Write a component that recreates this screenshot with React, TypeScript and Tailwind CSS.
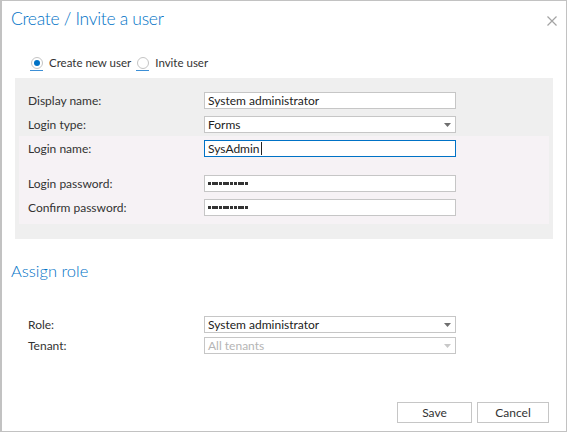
import React from 'react'

const font = "font-['Segoe_UI','Lato',sans-serif]"

function Arrow({ disabled = false }: { disabled?: boolean }) {
  return (
    <svg width="7" height="4" viewBox="0 0 7 4" className="shrink-0">
      <path d="M0 0H7L3.5 4Z" fill={disabled ? '#c8c8c8' : '#6f6f6f'} />
    </svg>
  )
}

function Field({ children, focused = false, select = false, disabled = false }: {
  children?: React.ReactNode
  focused?: boolean
  select?: boolean
  disabled?: boolean
}) {
  return (
    <div
      className={`w-[252px] h-[17px] bg-white border flex items-center justify-between pl-[3px] pr-[4px] ${
        focused ? 'border-[#0072c6]' : 'border-[#c6c6c6]'
      } ${disabled ? 'text-[#b5b5b5]' : 'text-[#222]'}`}
    >
      <span className="leading-[15px] whitespace-nowrap flex items-center">{children}</span>
      {select && <Arrow disabled={disabled} />}
    </div>
  )
}

// password mask
function Dots() {
  return (
    <span className="flex gap-[0.7px]">
      {Array.from({ length: 11 }).map((_, i) => (
        <span key={i} className="w-[3px] h-[3px] bg-[#333]" />
      ))}
    </span>
  )
}

function Row({ label, children, className = '' }: { label: string; children: React.ReactNode; className?: string }) {
  return (
    <div className={`flex items-center ${className}`}>
      <div className="w-[176px] shrink-0 leading-[17px]">{label}</div>
      {children}
    </div>
  )
}

function Radio({ checked, label }: { checked: boolean; label: string }) {
  return (
    <label className="flex items-center gap-[6px]">
      <span className="flex flex-col items-center">
        <span className="w-[12px] h-[12px] rounded-full border border-[#c4c4c4] bg-white flex items-center justify-center">
          {checked && <span className="w-[6px] h-[6px] rounded-full bg-[#0072c6]" />}
        </span>
        <span className="w-[13px] h-px bg-[#3c8fd6] mt-px" />
      </span>
      <span className="leading-[16px] -mt-[2px] text-[11.5px]">{label}</span>
    </label>
  )
}

export default function App() {
  return (
    <div className={`w-[567px] h-[432px] bg-white border border-[#c2c2c2] border-l-2 flex flex-col text-[12px] text-[#333] ${font}`}>
      {/* Header */}
      <div className="flex items-start justify-between pl-[9px] pr-[9px] pt-[5px]">
        <h1 className="text-[17.5px] tracking-[-0.3px] leading-[26px] text-[#0072c6] font-light">Create / Invite a user</h1>
        <svg width="10" height="10" viewBox="0 0 10 10" className="mt-[10px]">
          <path d="M0.5 0.5L9.5 9.5M9.5 0.5L0.5 9.5" stroke="#a3a3a3" strokeWidth="1.2" />
        </svg>
      </div>

      {/* Radios */}
      <div className="flex items-center gap-[5px] pl-[28px] mt-[25px]">
        <Radio checked label="Create new user" />
        <Radio checked={false} label="Invite user" />
      </div>

      {/* User panel */}
      <div className="mx-[13px] mt-[7px] bg-[#efefef] pt-[14px] pb-[15px]">
        <div className="px-[13px]">
          <Row label="Display name:">
            <Field>System administrator</Field>
          </Row>
          <Row label="Login type:" className="mt-[7px]">
            <Field select>Forms</Field>
          </Row>
        </div>
        <div className="mx-[4px] mt-[3px] bg-[#f6f2f5] pl-[9px] pt-[4px] pb-[8px]">
          <Row label="Login name:">
            <Field focused>
              SysAdmin<span className="inline-block w-px h-[13px] bg-[#222] ml-px" />
            </Field>
          </Row>
          <Row label="Login password:" className="mt-[18px]">
            <Field>
              <Dots />
            </Field>
          </Row>
          <Row label="Confirm password:" className="mt-[7px]">
            <Field>
              <Dots />
            </Field>
          </Row>
        </div>
      </div>

      {/* Assign role */}
      <h2 className="pl-[9px] mt-[20px] text-[16.5px] leading-[24px] text-[#0072c6] font-light">Assign role</h2>
      <div className="pl-[26px] mt-[33px]">
        <Row label="Role:">
          <Field select>System administrator</Field>
        </Row>
        <Row label="Tenant:" className="mt-[4px]">
          <Field select disabled>All tenants</Field>
        </Row>
      </div>

      {/* Buttons */}
      <div className="flex justify-end gap-[5px] pr-[17px] mt-[48px]">
        <button className="w-[75px] h-[21px] border border-[#c6c6c6] bg-white text-[#333] leading-[19px]">Save</button>
        <button className="w-[72px] h-[21px] border border-[#c6c6c6] bg-white text-[#333] leading-[19px]">Cancel</button>
      </div>
    </div>
  )
}
